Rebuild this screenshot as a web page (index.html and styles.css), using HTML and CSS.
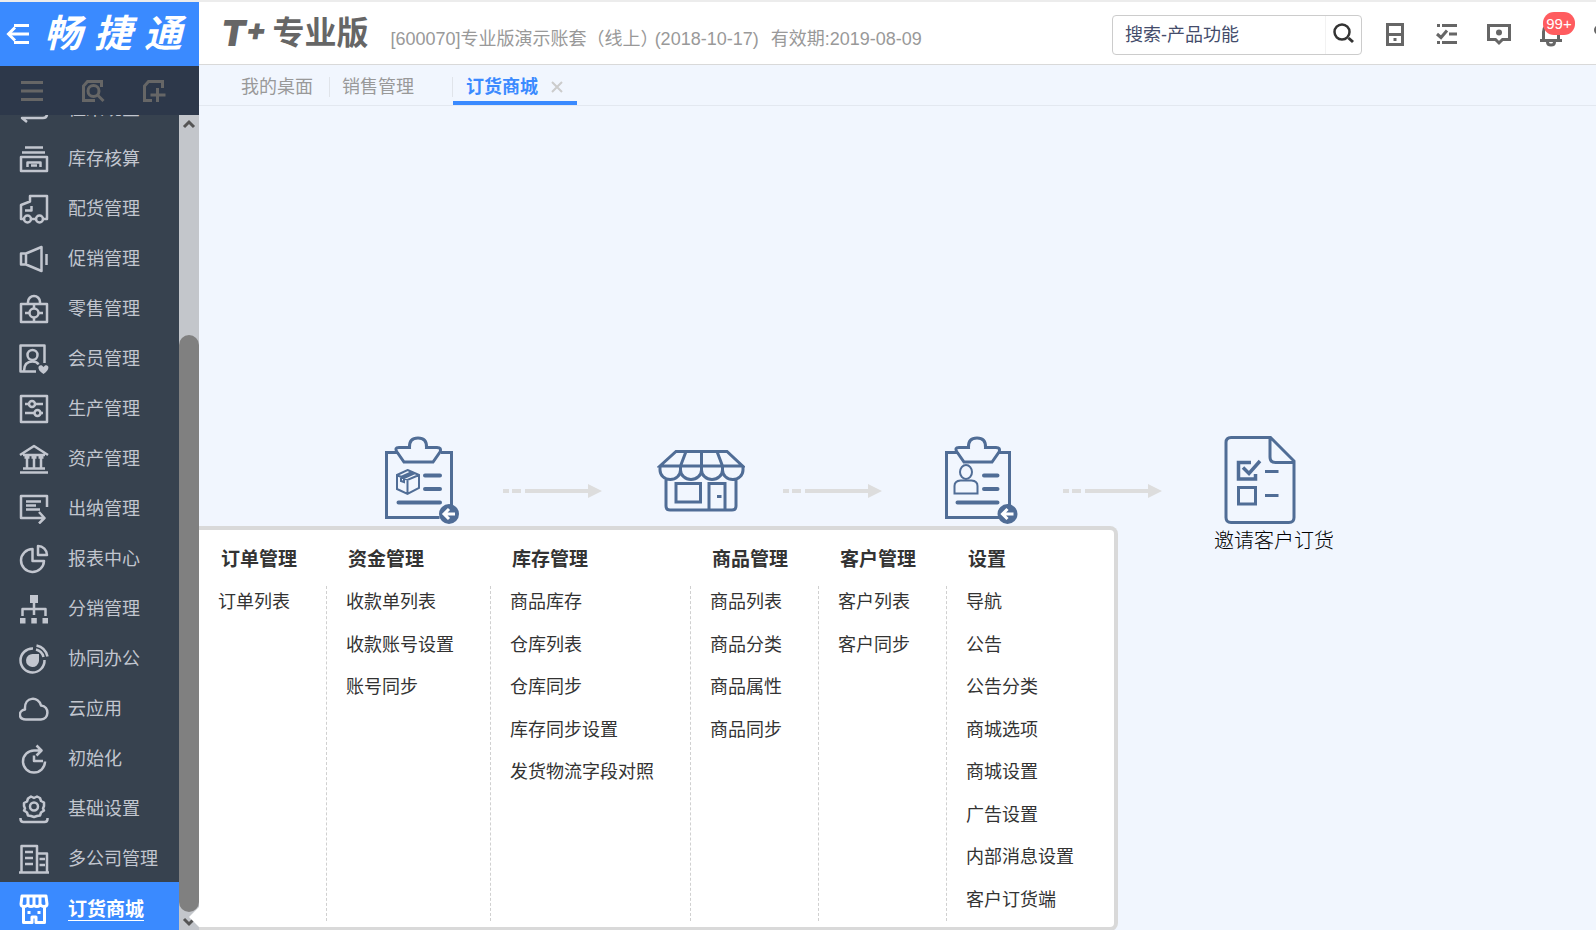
FILE: index.html
```html
<!DOCTYPE html>
<html lang="zh-CN">
<head>
<meta charset="utf-8">
<title>T+ 专业版</title>
<link rel="stylesheet" href="styles.css">
</head>
<body>
<aside class="sidebar">
  <div class="brand">
    <button class="icon-btn" aria-label="收起菜单">
      <svg width="24" height="24" viewBox="0 0 24 24" fill="none" stroke="#fff" stroke-width="3"><path d="M8 3.500h15M3 12h20M8 20.500h15"/><path d="M9 5.500L2.500 12 9 18.500"/></svg>
    </button>
    <div class="brand-name"><span>畅</span><span>捷</span><span>通</span></div>
  </div>
  <div class="tools">
    <button class="icon-btn" aria-label="菜单"><svg width="24" height="24" viewBox="0 0 24 24" fill="none" stroke="#666" stroke-width="3"><path d="M1 3.500h22M1 12h22M1 20.500h22"/></svg></button>
    <button class="icon-btn" aria-label="查找"><svg width="24" height="24" viewBox="0 0 24 24" fill="none" stroke="#666" stroke-width="3"><path d="M14 21.500H2.500V7l4-4.500h14V8"/><circle cx="12.500" cy="12" r="5.500"/><path d="M16.500 16l6 6"/></svg></button>
    <button class="icon-btn" aria-label="新建"><svg width="24" height="24" viewBox="0 0 24 24" fill="none" stroke="#666" stroke-width="3"><path d="M10 21.500H2.500V7l4-4.500h14V9M15.500 9v14M8.500 16h15"/></svg></button>
  </div>
  <div class="nav-wrap">
    <nav class="nav">
      <ul class="nav-list">
        <li><a href="#"><svg class="ni" viewBox="0 0 30 30"><path d="M28 17v3q0 4-4 4H3l5 4M2 13v-3q0-4 4-4h21l-5-4"/></svg>往来现金</a></li>
        <li><a href="#"><svg class="ni" viewBox="0 0 30 30"><path d="M6 3.500h18M3 8.500h23M2 13h26v14H2zM8.500 23v-4.500h13V23M12 21.500h6"/></svg>库存核算</a></li>
        <li><a href="#"><svg class="ni" viewBox="0 0 30 30"><path d="M4.500 25H2V11l9-3.500V2h17v23h-3.500M12.500 25H16M12.500 12v4.500H6"/><circle cx="8.500" cy="25" r="3.500"/><circle cx="20.500" cy="25" r="3.500"/></svg>配货管理</a></li>
        <li><a href="#"><svg class="ni" viewBox="0 0 30 30"><path d="M2 9.500h5v11H2zM7 9.500L22.500 3v24L7 20.500M27.500 10v11"/></svg>促销管理</a></li>
        <li><a href="#"><svg class="ni" viewBox="0 0 30 30"><path d="M2 10h26v18H2zM9 10V8a6 6 0 0 1 12 0v2M15 10v4M15 24v4M6 19h4M20 19h4"/><circle cx="15" cy="19" r="4.500"/></svg>零售管理</a></li>
        <li><a href="#"><svg class="ni" viewBox="0 0 30 30"><path d="M17 27.500H1.500v-26h24V19"/><circle cx="13.500" cy="11" r="5"/><path d="M5 27c0-6 3-9.500 8.500-9.500 3 0 5 1 6 3"/><path class="fill" d="M24.500 30c-8-5-5-10-1.500-8.500l1.500 1.500 1.500-1.500c3.500-1.500 6 3.500-1.500 8.500z"/></svg>会员管理</a></li>
        <li><a href="#"><svg class="ni" viewBox="0 0 30 30"><path d="M2 2h26v26H2zM6 10h4M16 10h8M6 19h9M22 19h2"/><circle cx="13" cy="10" r="3"/><circle cx="18.500" cy="19" r="3"/></svg>生产管理</a></li>
        <li><a href="#"><svg class="ni" viewBox="0 0 30 30"><path d="M1 11L15 2l14 9M4 11h22M8 12v12M15 12v12M22 12v12M5.500 13.500h5M12.500 13.500h5M19.500 13.500h5M4 24.500h22M1 28.500h28"/></svg>资产管理</a></li>
        <li><a href="#"><svg class="ni" viewBox="0 0 30 30"><path d="M28 13V2H2v22h23M20 18l5.500 6-5.500 5.500M7 7.500h15M7 11.500h10M7 15.500h14"/></svg>出纳管理</a></li>
        <li><a href="#"><svg class="ni" viewBox="0 0 30 30"><path d="M13.500 5A11.500 11.500 0 1 0 25 17H13.500zM19 2v9h9a9 9 0 0 0-9-9z"/></svg>报表中心</a></li>
        <li><a href="#"><svg class="ni" viewBox="0 0 30 30"><path d="M15 8v13M3.500 22v-7h23v7"/><path class="fill" d="M11 1h8v8h-8zM1 24h5.500v5.500H1zM12.300 24h5.500v5.500h-5.500zM23.500 24H29v5.500h-5.500z"/></svg>分销管理</a></li>
        <li><a href="#"><svg class="ni" viewBox="0 0 30 30"><path d="M14 4.500A12 12 0 1 0 25.500 16M17 5.500q6 1.500 7.500 7.500M17.500 1.500q9 2 11 11"/><path class="fill" d="M14 10h6v7a6.500 6.500 0 1 1-6-7z"/></svg>协同办公</a></li>
        <li><a href="#"><svg class="ni" viewBox="0 0 30 30"><path d="M7 25.500c-8 0-8-9-1-10C5 2 20 2 22 11.500c9 1 8 14 0 14z"/></svg>云应用</a></li>
        <li><a href="#"><svg class="ni" viewBox="0 0 30 30"><path d="M21 6.500H15a11 11 0 1 0 11 11M17.500 1.500l5 5-5 5M15 11.500V17h9"/></svg>初始化</a></li>
        <li><a href="#"><svg class="ni" viewBox="0 0 30 30"><path d="M12 2.500l3 1.500 3-1.500 3 1.500 1 3 3 1.500v3.500l-1 2.500 1 2-3 2-1 3-3 .500-3 1-3-1-3-.500-1-3-3-2 1-2-1-2.500V9l3-1.500 1-3z"/><circle cx="15" cy="12.500" r="4"/><path d="M1.500 24v1q0 3 3 3h21q3 0 3-3v-1"/></svg>基础设置</a></li>
        <li><a href="#"><svg class="ni" viewBox="0 0 30 30"><path d="M0 28.500h30M2.500 28V2H18v26M18 9.500h10V28M6 8h8M6 14h8M6 20h8M20.500 15H26M20.500 21H26"/></svg>多公司管理</a></li>
        <li class="active"><a href="#"><svg class="ni" viewBox="0 0 30 30"><path d="M3 2h24l1 8q0 2.500-3 2.500t-4-2.500q0 2.500-3 2.500t-3-2.500q0 2.500-3 2.500T9 10q-1 2.500-4 2.500T2 10zM9 2v9M15 2v9M21 2v9M4.500 13v15.500H13V23h4v5.500h8.500V13M10 17v3M20 17v3"/></svg><span>订货商城</span></a></li>
      </ul>
    </nav>
    <div class="scrollbar">
      <svg width="20" height="20" viewBox="0 0 20 20" fill="none" stroke="#555" stroke-width="3"><path d="M5 12l5-5 5 5"/></svg>
      <div class="thumb"></div>
      <svg width="20" height="18" viewBox="0 0 20 18" fill="none" stroke="#555" stroke-width="3"><path d="M5 7l5 5 5-5"/></svg>
    </div>
    <div class="flyout">
      <section><h2>订单管理</h2><ul><li><a href="#">订单列表</a></li></ul></section>
      <section><h2>资金管理</h2><ul><li><a href="#">收款单列表</a></li><li><a href="#">收款账号设置</a></li><li><a href="#">账号同步</a></li></ul></section>
      <section><h2>库存管理</h2><ul><li><a href="#">商品库存</a></li><li><a href="#">仓库列表</a></li><li><a href="#">仓库同步</a></li><li><a href="#">库存同步设置</a></li><li><a href="#">发货物流字段对照</a></li></ul></section>
      <section><h2>商品管理</h2><ul><li><a href="#">商品列表</a></li><li><a href="#">商品分类</a></li><li><a href="#">商品属性</a></li><li><a href="#">商品同步</a></li></ul></section>
      <section><h2>客户管理</h2><ul><li><a href="#">客户列表</a></li><li><a href="#">客户同步</a></li></ul></section>
      <section><h2>设置</h2><ul><li><a href="#">导航</a></li><li><a href="#">公告</a></li><li><a href="#">公告分类</a></li><li><a href="#">商城选项</a></li><li><a href="#">商城设置</a></li><li><a href="#">广告设置</a></li><li><a href="#">内部消息设置</a></li><li><a href="#">客户订货端</a></li></ul></section>
    </div>
  </div>
</aside>
<div class="page">
  <header class="header">
    <h1 class="product"><span class="product-t">T</span><span class="product-plus">+</span><span>专业版</span></h1>
    <div class="account"><span>[600070]专业版演示账套（线上）</span><span>(2018-10-17)</span><span>有效期:2019-08-09</span></div>
    <form class="search">
      <input type="text" aria-label="搜索" value="搜索-产品功能">
      <button type="button" aria-label="搜索"><svg width="24" height="24" viewBox="0 0 24 24" fill="none" stroke="#333"><circle cx="10" cy="11" r="7.500" stroke-width="2.500"/><path d="M16.500 17l4.500 4" stroke-width="3"/></svg></button>
    </form>
    <div class="actions">
      <button class="icon-btn" aria-label="手机"><svg width="24" height="24" viewBox="0 0 24 24" fill="none" stroke="#666" stroke-width="3"><path d="M4.500 1.500h15v20h-15zM4.500 11.500h15"/><path d="M10.500 16.500h3"/></svg></button>
      <button class="icon-btn" aria-label="待办"><svg width="24" height="24" viewBox="0 0 24 24" fill="none" stroke="#666" stroke-width="3"><path d="M2 2.500h3M7 2.500h15M14 11h8M2 19.500h3M7 19.500h15M2 11l4 3.500 6-7"/></svg></button>
      <button class="icon-btn" aria-label="消息"><svg width="24" height="24" viewBox="0 0 24 24" fill="none" stroke="#666" stroke-width="3"><path d="M1.500 2.500h21v14h-7L12 20l-3.500-3.500h-7z"/><circle cx="12" cy="9.500" r="3" fill="#666" stroke="none"/></svg></button>
      <button class="icon-btn bell" aria-label="通知"><svg width="24" height="24" viewBox="0 0 24 24" fill="none" stroke="#666" stroke-width="3"><path d="M1 17.500h22M4.500 17V9q0-7 7.500-7t7.500 7v8M8.500 19q0 3 3.500 3t3.500-3"/></svg><span class="badge">99+</span></button>
      <button class="icon-btn" aria-label="用户"><svg width="24" height="24" viewBox="0 0 24 24"><circle cx="8" cy="7" r="5" fill="#666"/></svg></button>
    </div>
  </header>
  <nav class="tabs">
    <a class="tab" href="#">我的桌面</a>
    <a class="tab tab-mid" href="#">销售管理</a>
    <div class="tab current"><a href="#">订货商城</a><button class="icon-btn" aria-label="关闭"><svg width="12" height="12" viewBox="0 0 12 12" stroke="#ccc" stroke-width="2"><path d="M1 1l10 10M11 1L1 11"/></svg></button></div>
  </nav>
  <main class="flow">
    <div class="step">
      <svg width="80" height="92" viewBox="0 0 80 92" class="fi"><path d="M17 18.500H5.500v65h53M60 18.500h10.500V72"/><path d="M16 18q-3-4.500 2-4.500h10.500Q28 4 37 4t8.500 9.500H56q5 0 3 4.500l-7 10H23z"/><path class="thin" d="M26.500 36L38 41v13l-11.500 6L16 55V41zM16 41l10.500 5L38 41M26.500 46v14M20 43l11-5M20 43v4l3 1v-4l11-5"/><path d="M44 41.500h15M44 55h15M17.500 68.500H59" stroke-linecap="round" stroke-width="4"/><circle cx="68" cy="80" r="10" class="dot"/><path d="M74 80H63M68 75l-5 5 5 5" stroke="#fff"/></svg>
    </div>
    <svg class="arrow" width="100" height="92" viewBox="0 0 100 92"><path d="M0 55h6v4H0zM9 55h9v4H9zM22 55h63v-5l14 7-14 7v-5H22z"/></svg>
    <div class="step">
      <svg width="88" height="92" viewBox="1 0 88 92" class="fi"><path d="M20 17.500h51L86.500 32H4zM30 17.500L24.500 32M45.500 17.500V32M61 17.500L66.500 32"/><path d="M4 32v4a10.200 9.500 0 0 0 20.500 0v-4M24.500 36a10.500 9.500 0 0 0 21 0v-4M45.500 36a10.500 9.500 0 0 0 21 0v-4M66.500 36a10.200 9.500 0 0 0 20.500 0v-4M10 45v27q0 4 4 4h62q4 0 4-4V45M20 49.500h24.500v18.500H20zM53 76V49.500h16V76M61 62.500h4.500"/></svg>
    </div>
    <svg class="arrow" width="100" height="92" viewBox="0 0 100 92"><path d="M0 55h6v4H0zM9 55h9v4H9zM22 55h63v-5l14 7-14 7v-5H22z"/></svg>
    <div class="step">
      <svg width="80" height="92" viewBox="0 0 80 92" class="fi"><path d="M17 18.500H5.500v65h53M58 18.500h10.500V72"/><path d="M16 18q-3-4.500 2-4.500h9.500Q27 4 36 4t8.500 9.500H55q5 0 3 4.500l-7 10H23z"/><ellipse class="thin" cx="25" cy="38" rx="6" ry="7"/><path class="thin" d="M13.500 59.500V52q0-5 6-5.500h11q6 .500 6 5.500v7.500z"/><path d="M43 41.500h13.500M43 55h13.500M16.500 68.500h40" stroke-linecap="round" stroke-width="4"/><circle cx="66.500" cy="80" r="10" class="dot"/><path d="M72.500 80h-11M66.500 75l-5 5 5 5" stroke="#fff"/></svg>
    </div>
    <svg class="arrow" width="100" height="92" viewBox="0 0 100 92"><path d="M0 55h6v4H0zM9 55h9v4H9zM22 55h63v-5l14 7-14 7v-5H22z"/></svg>
    <div class="step">
      <svg width="80" height="92" viewBox="0 0 80 92" class="fi"><path d="M10 3.500h39.500L73 27v56.500q0 5-5 5H10q-5 0-5-5v-75q0-5 5-5zM49 4v19q0 5.500 5.500 5.500H73"/><path d="M30 28.500H17.500v16.500h17v-5M22 33.500l6 6L39 27" stroke-width="3.500"/><path d="M17.500 53.500h17V70h-17zM44 37.500h13.500M44 61.500h13.500" stroke-width="3"/></svg>
      <a class="step-label" href="#">邀请客户订货</a>
    </div>
  </main>
</div>
</body>
</html>
```
FILE: styles.css
```css
* { box-sizing: border-box; }
body {
  margin: 0;
  height: 100vh;
  overflow: hidden;
  display: flex;
  border-top: 2px solid #ececec;
  background: #f1f6fe;
  color: #333;
  font: 18px/24px "Liberation Sans", "Noto Sans CJK SC", sans-serif;
}
ul { list-style: none; margin: 0; padding: 0; }
a { color: inherit; text-decoration: none; }
svg { display: block; flex: none; }
.icon-btn { border: 0; padding: 0; background: none; display: block; }

.sidebar { width: 199px; flex: none; display: flex; flex-direction: column; position: relative; z-index: 1; }
.brand { height: 64px; display: flex; align-items: center; gap: 14px; padding-left: 6px; background: #3a8aff; }
.brand-name { display: flex; gap: 12px; color: #fff; font-size: 38px; line-height: 60px; font-weight: 700; font-style: italic; }
.tools { height: 49px; display: flex; align-items: center; gap: 37px; padding-left: 20px; background: #2d384a; }
.nav-wrap { flex: 1; min-height: 0; display: flex; position: relative; }
.nav { flex: 1; overflow: hidden; background: #37424f; }
.nav-list { margin-top: -33px; }
.nav-list a { display: flex; align-items: center; gap: 19px; height: 50px; padding: 3px 0 0 19px; color: #c2c6cf; }
.nav-list .active a { background: #3a8aff; color: #fff; font-size: 19px; font-weight: 700; }
.active span { padding-top: 2px; text-decoration: underline; text-underline-offset: 4px; text-decoration-thickness: 1px; }
.ni { width: 30px; height: 30px; fill: none; stroke: currentColor; stroke-width: 2.5; stroke-linejoin: round; }
.ni .fill { fill: currentColor; stroke: none; }
.active .ni { stroke-width: 3; }
.scrollbar { width: 20px; display: flex; flex-direction: column; background: #c3c6cb; }
.thumb { flex: 1; margin-top: 200px; border-radius: 10px; background: #808080; }

.flyout {
  position: absolute;
  left: 100%;
  bottom: -1px;
  display: flex;
  background: #fff;
  border: 4px solid #d9d9d9;
  border-left: 0;
  border-radius: 0 8px 8px 0;
  padding-bottom: 6px;
}
.flyout::before {
  content: "";
  position: absolute;
  left: -10px;
  bottom: 0;
  border: 10px solid transparent;
  border-left: 0;
  border-right-color: #fff;
}
.flyout h2 { margin: 0; padding: 18px 0 14px 22px; font-size: 19px; line-height: 24px; white-space: nowrap; }
.flyout ul {
  display: grid;
  grid-template-rows: repeat(8, 30px);
  align-content: space-between;
  height: 335px;
  padding: 1px 36px 6px 19px;
  border-left: 1px dashed #d0d0d0;
}
.flyout section:first-child ul { border-left: 0; }
.flyout section:last-child ul { padding-right: 40px; }
.flyout li { line-height: 30px; white-space: nowrap; }

.page { flex: 1; min-width: 0; display: flex; flex-direction: column; }
.header { height: 63px; flex: none; display: flex; align-items: center; overflow: hidden; background: #fff; border-bottom: 1px solid #d9d9d9; padding-left: 22px; }
.product { display: flex; align-items: center; margin: 0; color: #666; font-size: 32px; line-height: 48px; font-weight: 700; white-space: nowrap; }
.product-t { font-family: Inter, "Liberation Sans", sans-serif; font-size: 36px; font-weight: 900; font-style: italic; }
.product-plus { align-self: flex-start; font-family: Inter, "Liberation Sans", sans-serif; font-size: 30px; line-height: 40px; font-weight: 900; font-style: italic; margin-right: 6px; }
.account { display: flex; margin: 12px 0 0 22px; gap: 12px; color: #999; white-space: nowrap; }
.account span:first-child { margin-right: -16px; }
.search { display: flex; flex: none; width: 250px; height: 40px; margin: 4px 0 0 auto; border: 1px solid #ccc; border-radius: 4px; background: #fff; }
.search input { flex: 1; min-width: 0; border: 0; padding: 0 12px; background: none; font: inherit; color: #444c6b; outline: 0; }
.search button { width: 36px; border: 0; border-left: 1px solid #f2f2f2; padding: 0 0 4px 6px; background: none; }
.actions { display: flex; flex: none; gap: 28px; margin: 3px -19px 0 21px; }
.bell { position: relative; }
.badge { position: absolute; left: 4px; top: -11px; width: 32px; border-radius: 11px; background: #ff5c5f; color: #fff; font-size: 15px; line-height: 23px; text-align: center; }

.tabs { height: 41px; flex: none; display: flex; align-items: center; border-bottom: 1px solid #e3e8f0; padding-left: 30px; color: #999; }
.tab { display: flex; align-items: center; height: 20px; margin-top: 4px; line-height: 20px; padding: 0 16px 0 12px; }
.tab-mid { border-left: 1px solid #e0e4ea; border-right: 1px solid #e0e4ea; padding-right: 38px; }
.current { gap: 13px; height: 40px; margin-top: 0; padding: 8px 14px 0 13px; border-bottom: 4px solid #3a8aff; color: #3a8aff; font-weight: 700; }

.flow { flex: 1; display: flex; padding: 328px 0 0 124px; }
.step { width: 180px; flex: none; display: flex; flex-direction: column; align-items: center; padding-left: 15px; }
.step-label { align-self: flex-end; padding-right: 9px; margin-top: 3px; font-size: 20px; font-weight: 300; color: #000; }
.fi { fill: none; stroke: #506d96; stroke-width: 3; }
.fi .thin { stroke-width: 2; }
.fi .dot { fill: #506d96; stroke: none; }
.arrow { fill: #ddd; }
```
